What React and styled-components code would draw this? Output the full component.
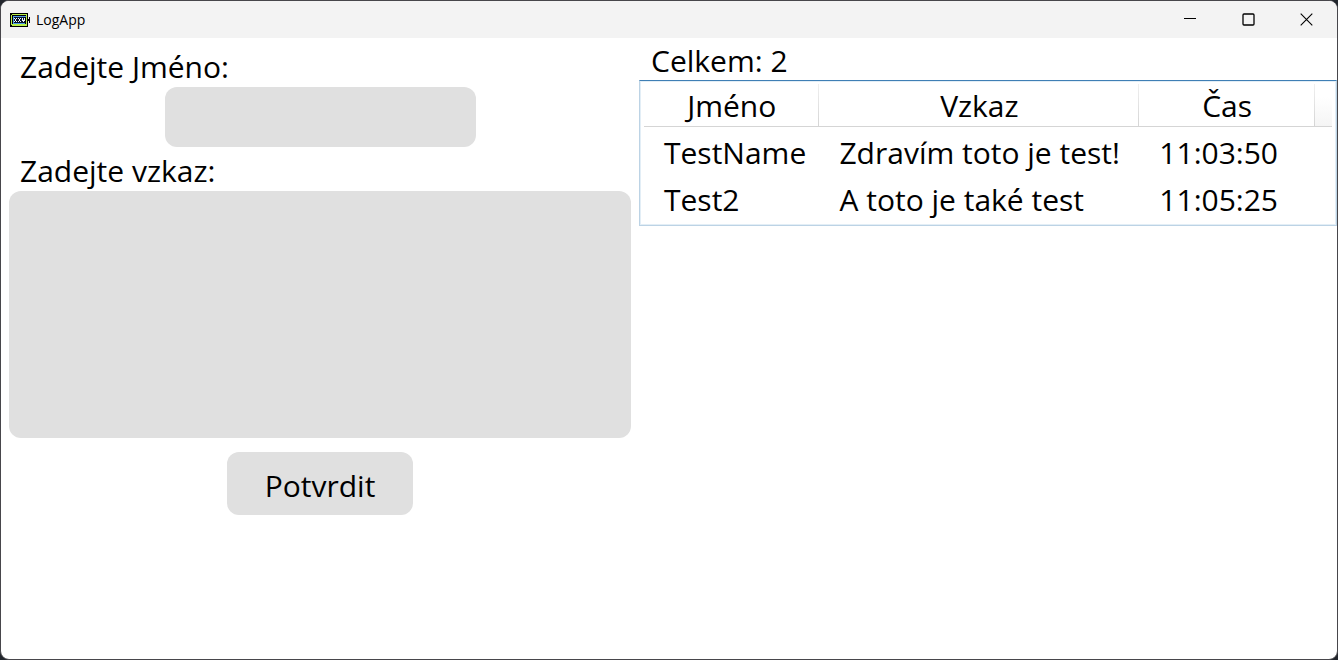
import React from "react";
import styled, { createGlobalStyle } from "styled-components";

const GlobalStyle = createGlobalStyle`
  *, *::before, *::after { box-sizing: border-box; }
  body {
    margin: 0;
    background: #22262d;
    color: #000;
    font-family: "Segoe UI", "Open Sans", "Noto Sans", sans-serif;
  }
`;

const Window = styled.div`
  display: flex;
  flex-direction: column;
  min-height: 100vh;
  border: 1px solid #47464b;
  border-radius: 9px;
  overflow: hidden;
  background: #fff;
`;

const TitleBar = styled.header`
  display: flex;
  align-items: center;
  height: 37px;
  padding: 0 2px 0 9px;
  background: #f3f3f3;
`;

const AppTitle = styled.h1`
  flex: 1;
  margin: 0 0 0 6px;
  font-size: 14px;
  line-height: 20px;
  font-weight: 400;
`;

const CaptionButton = styled.button`
  display: grid;
  place-items: center;
  width: 58px;
  height: 36px;
  padding: 0;
  border: 0;
  background: transparent;
`;

const Content = styled.main`
  flex: 1;
  display: grid;
  grid-template-columns: minmax(0, 638fr) minmax(0, 698fr);
`;

const Form = styled.form`
  display: flex;
  flex-direction: column;
  align-items: center;
  padding: 9px 8px 0;
`;

const Label = styled.label`
  align-self: stretch;
  padding-left: 11px;
  font-size: 30px;
  line-height: 40px;
`;

const fieldStyle = `
  border: 0;
  border-radius: 12px;
  background: #e0e0e0;
  color: #000;
  font-family: inherit;
  font-size: 30px;
  outline: none;
`;

const NameInput = styled.input`
  ${fieldStyle}
  width: 50%;
  height: 60px;
  margin: 0 0 4px;
  padding: 0 12px;
`;

const MessageInput = styled.textarea`
  ${fieldStyle}
  display: block;
  width: 100%;
  height: 247px;
  padding: 8px 12px;
  resize: none;
`;

const SubmitButton = styled.button`
  ${fieldStyle}
  width: 30%;
  min-width: 150px;
  height: 63px;
  margin-top: 14px;
  padding: 3px 0 0;
`;

const Log = styled.section`
  min-width: 0;
`;

const Total = styled.p`
  margin: 0;
  padding: 4px 12px 0;
  font-size: 30px;
  line-height: 38px;
`;

const TableFrame = styled.div`
  padding: 3px 4px 4px;
  border: 1px solid #bcd3e5;
  border-top-color: #3f7fb5;
  box-shadow: inset 0 0 0 1px #e3eef6;
`;

const Table = styled.table`
  width: 100%;
  border-collapse: separate;
  border-spacing: 0;
  table-layout: fixed;
  font-size: 30px;
  line-height: 40px;
`;

const Column = styled.col`
  width: ${({ $width }) => $width};
`;

const HeaderCell = styled.th`
  height: 43px;
  padding: 2px 0 0;
  border-bottom: 1px solid #d5d5d5;
  background: linear-gradient(#f0f0f0, #d5d5d5) right / 1px 100% no-repeat;
  font-weight: 400;
`;

const HeaderFiller = styled.td`
  padding: 0;
  border-bottom: 1px solid #d5d5d5;
  background: linear-gradient(#fff 30%, #f5f5f5);
`;

const Cell = styled.td`
  height: 47px;
  padding: 6px 0 1px 20px;
  white-space: nowrap;
`;

const columns = [
  { title: "Jméno", width: "25.5%" },
  { title: "Vzkaz", width: "46.5%" },
  { title: "Čas", width: "25.5%" },
];

const entries = [
  { name: "TestName", message: "Zdravím toto je test!", time: "11:03:50" },
  { name: "Test2", message: "A toto je také test", time: "11:05:25" },
];

function AppIcon() {
  return (
    <svg width="20" height="16" viewBox="0 0 20 16" shapeRendering="crispEdges" aria-hidden="true">
      <path fill="#000" d="M0 1H18V15H0zM18 7H19V5H20V11H19V9H18z" />
      <path fill="#b9f04a" d="M2 2H17V3H2zM1 3H2V13H1zM2 12H17V14H2zM16 3H17V13H16z" />
      <path fill="#4f9ce8" d="M3 4H16V5H3zM3 5H4V11H3zM3 11H15V12H3z" />
      <path fill="#07142b" d="M4 5H15V11H4z" />
      <path
        fill="#f4fbff"
        d="M4 6H5V7H4zM6 6H7V7H6zM5 7H6V9H5zM4 9H5V10H4zM6 9H7V10H6zM8 6H9V7H8zM10 6H11V7H10zM9 7H10V9H9zM8 9H9V10H8zM10 9H11V10H10zM12 6H13V9H12zM14 6H15V9H14zM13 8H14V10H13z"
      />
    </svg>
  );
}

function CaptionIcon({ children }) {
  return (
    <svg width="13" height="13" viewBox="0 0 13 13" fill="none" stroke="#000" strokeWidth="1.1" aria-hidden="true">
      {children}
    </svg>
  );
}

export default function App() {
  return (
    <>
      <GlobalStyle />
      <Window>
        <TitleBar>
          <AppIcon />
          <AppTitle>LogApp</AppTitle>
          <CaptionButton type="button" aria-label="Minimalizovat">
            <CaptionIcon><path d="M0 5.5H12" /></CaptionIcon>
          </CaptionButton>
          <CaptionButton type="button" aria-label="Maximalizovat">
            <CaptionIcon><rect x="1" y="1" width="11" height="11" rx="1" strokeWidth="1.3" /></CaptionIcon>
          </CaptionButton>
          <CaptionButton type="button" aria-label="Zavřít">
            <CaptionIcon><path d="M.7 .7L12.3 12.3M12.3 .7L.7 12.3" /></CaptionIcon>
          </CaptionButton>
        </TitleBar>
        <Content>
          <Form onSubmit={(event) => event.preventDefault()}>
            <Label htmlFor="name">Zadejte Jméno:</Label>
            <NameInput id="name" type="text" />
            <Label htmlFor="message">Zadejte vzkaz:</Label>
            <MessageInput id="message" />
            <SubmitButton type="submit">Potvrdit</SubmitButton>
          </Form>
          <Log>
            <Total>Celkem: {entries.length}</Total>
            <TableFrame>
              <Table>
                <colgroup>
                  {columns.map((column) => (
                    <Column key={column.title} $width={column.width} />
                  ))}
                  <Column $width="auto" />
                </colgroup>
                <thead>
                  <tr>
                    {columns.map((column) => (
                      <HeaderCell key={column.title} scope="col">{column.title}</HeaderCell>
                    ))}
                    <HeaderFiller />
                  </tr>
                </thead>
                <tbody>
                  {entries.map((entry) => (
                    <tr key={entry.time}>
                      <Cell>{entry.name}</Cell>
                      <Cell>{entry.message}</Cell>
                      <Cell colSpan={2}>{entry.time}</Cell>
                    </tr>
                  ))}
                </tbody>
              </Table>
            </TableFrame>
          </Log>
        </Content>
      </Window>
    </>
  );
}
